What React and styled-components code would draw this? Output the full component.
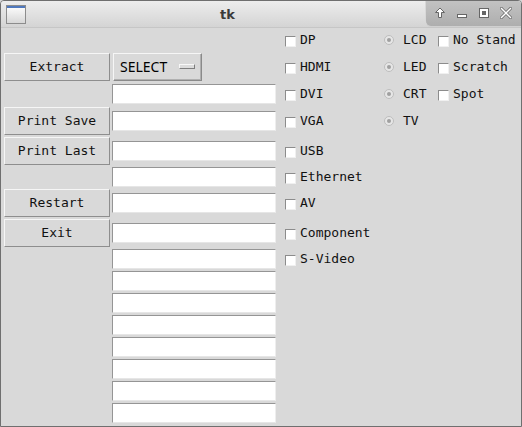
import React from 'react'
import styled, {createGlobalStyle} from 'styled-components'

const GlobalStyle = createGlobalStyle`
    html, body {
        margin: 0;
        padding: 0;
        background: #d9d9d9;
    }
`

const leftButtons = [
    {label: 'Extract', row: 1},
    {label: 'Print Save', row: 3},
    {label: 'Print Last', row: 4},
    {label: 'Restart', row: 6},
    {label: 'Exit', row: 7},
]

const entryRows = [2, 3, 4, 5, 6, 7, 8, 9, 10, 11, 12, 13, 14, 15]

const ports = ['DP', 'HDMI', 'DVI', 'VGA', 'USB', 'Ethernet', 'AV', 'Component', 'S-Video']
const screens = ['LCD', 'LED', 'CRT', 'TV']
const extras = ['No Stand', 'Scratch', 'Spot']

const WindowIcon = () => (
    <svg width="20" height="19" viewBox="0 0 20 19">
        <defs>
            <linearGradient id="wbody" x1="0" y1="0" x2="0" y2="1">
                <stop offset="0" stopColor="#ffffff" />
                <stop offset="1" stopColor="#d6d6d6" />
            </linearGradient>
        </defs>
        <rect x="0.5" y="0.5" width="19" height="18" fill="url(#wbody)" stroke="#8c8c8c" />
        <rect x="1" y="1" width="18" height="2" fill="#4f78bd" />
    </svg>
)

const UpIcon = () => (
    <svg width="12" height="12" viewBox="0 0 12 12">
        <path d="M6 1 L10.5 5.5 L7.5 5.5 L7.5 10.5 L4.5 10.5 L4.5 5.5 L1.5 5.5 Z" fill="#fff" stroke="#666" strokeWidth="1" strokeLinejoin="round" />
    </svg>
)

const MinIcon = () => (
    <svg width="12" height="12" viewBox="0 0 12 12">
        <rect x="1.5" y="7.5" width="9" height="3" fill="#fff" stroke="#666" />
    </svg>
)

const MaxIcon = () => (
    <svg width="12" height="12" viewBox="0 0 12 12">
        <rect x="1" y="1" width="10" height="10" fill="#666" />
        <rect x="2" y="2" width="8" height="8" fill="#fff" />
        <rect x="4" y="4" width="4" height="4" fill="#666" />
    </svg>
)

const CloseIcon = () => (
    <svg width="12" height="12" viewBox="0 0 12 12">
        <path d="M1.5 1.5 L10.5 10.5 M10.5 1.5 L1.5 10.5" stroke="#666" strokeWidth="3" strokeLinecap="square" />
        <path d="M1.5 1.5 L10.5 10.5 M10.5 1.5 L1.5 10.5" stroke="#fff" strokeWidth="1.5" strokeLinecap="square" />
    </svg>
)

const RadioMark = () => (
    <svg width="12" height="12" viewBox="0 0 12 12">
        <circle cx="6" cy="6" r="4.5" fill="#e6e6e6" stroke="#bdbdbd" />
        <circle cx="6" cy="6" r="2" fill="#a0a0a0" />
    </svg>
)

const App = () => {
    return (
        <>
            <GlobalStyle />
            <Window>
                <TitleBar>
                    <IconSlot>
                        <WindowIcon />
                    </IconSlot>
                    <Title>tk</Title>
                    <Controls>
                        <Control><UpIcon /></Control>
                        <Control><MinIcon /></Control>
                        <Control><MaxIcon /></Control>
                        <Control><CloseIcon /></Control>
                    </Controls>
                </TitleBar>
                <Body>
                    {leftButtons.map(b => (
                        <Button key={b.label} $row={b.row}>{b.label}</Button>
                    ))}
                    <MenuButton>
                        SELECT
                        <MenuIndicator />
                    </MenuButton>
                    {entryRows.map(r => (
                        <Entry key={r} $row={r} />
                    ))}
                    {ports.map((p, i) => (
                        <Check key={p} $row={i} $col={2}>
                            <Box />
                            {p}
                        </Check>
                    ))}
                    {screens.map((s, i) => (
                        <Radio key={s} $row={i}>
                            <RadioMark />
                            {s}
                        </Radio>
                    ))}
                    {extras.map((e, i) => (
                        <Check key={e} $row={i} $col={4}>
                            <Box />
                            {e}
                        </Check>
                    ))}
                </Body>
            </Window>
        </>
    )
}

export default App

const Window = styled.div`
    width: 522px;
    height: 427px;
    box-sizing: border-box;
    border: 1px solid #6f6f6f;
    border-radius: 4px 4px 0 0;
    background: #d9d9d9;
    overflow: hidden;
    display: flex;
    flex-direction: column;
`
const TitleBar = styled.div`
    height: 26px;
    flex-shrink: 0;
    display: flex;
    align-items: center;
    background: linear-gradient(#ededed, #d4d4d4);
    border-bottom: 1px solid #c6c6c6;
`
const IconSlot = styled.div`
    width: 20px;
    height: 19px;
    margin: 0 0 0 5px;
    display: flex;
`
const Title = styled.div`
    flex: 1;
    text-align: center;
    padding-left: 4px;
    font: bold 13px "DejaVu Sans", sans-serif;
    color: #3a3a3a;
`
const Controls = styled.div`
    align-self: stretch;
    width: 96px;
    margin-top: -1px;
    height: 27px;
    box-sizing: border-box;
    display: flex;
    align-items: center;
    padding-left: 3px;
    background: linear-gradient(#c3c3c3, #aeaeae);
    border-left: 1px solid #d8d8d8;
    border-bottom: 1px solid #d0d0d0;
    border-bottom-left-radius: 6px;
`
const Control = styled.div`
    width: 22px;
    display: flex;
    justify-content: center;
    align-items: center;
`
const Body = styled.div`
    flex: 1;
    display: grid;
    grid-template-columns: 110px 168px 98px 55px 1fr;
    grid-template-rows: 24px 30px 24px 30px 30px 22px 30px 30px repeat(8, 22px);
    padding-left: 1px;
`
const Button = styled.div`
    grid-row: ${p => p.$row + 1};
    grid-column: 1;
    align-self: center;
    margin-left: 2px;
    width: 106px;
    height: 28px;
    box-sizing: border-box;
    display: flex;
    align-items: center;
    justify-content: center;
    padding-bottom: 1px;
    background: #d9d9d9;
    border: 1px solid;
    border-color: #f6f6f6 #8e8e8e #8e8e8e #f6f6f6;
    font: 13px "DejaVu Sans Mono", monospace;
    color: #111;
`
const MenuButton = styled.div`
    grid-row: 2;
    grid-column: 2;
    align-self: center;
    margin-left: 1px;
    width: 89px;
    height: 28px;
    box-sizing: border-box;
    display: flex;
    align-items: center;
    gap: 12px;
    padding-left: 6px;
    padding-bottom: 1px;
    background: #d9d9d9;
    border: 1px solid;
    border-color: #f6f6f6 #8a8a8a #8a8a8a #f6f6f6;
    box-shadow: inset -1px -1px 0 #b0b0b0;
    font: 14px "Noto Sans", sans-serif;
    color: #000;
`
const MenuIndicator = styled.span`
    width: 16px;
    height: 5px;
    box-sizing: border-box;
    background: #dcdcdc;
    border: 1px solid;
    border-color: #f8f8f8 #7e7e7e #7e7e7e #f8f8f8;
`
const Entry = styled.div`
    grid-row: ${p => p.$row + 1};
    grid-column: 2;
    align-self: center;
    width: 164px;
    height: 20px;
    box-sizing: border-box;
    background: #ffffff;
    border: 1px solid;
    border-color: #959595 #eeeeee #e6e6e6 #959595;
`
const Check = styled.div`
    grid-row: ${p => p.$row + 1};
    grid-column: ${p => p.$col + 1};
    display: flex;
    align-items: center;
    gap: 4px;
    padding-left: 5px;
    padding-bottom: 1px;
    white-space: nowrap;
    font: 13px "DejaVu Sans Mono", monospace;
    color: #111;
`
const Box = styled.span`
    width: 11px;
    height: 11px;
    margin-top: 3px;
    box-sizing: border-box;
    background: #ffffff;
    border: 1px solid;
    border-color: #8c8c8c #f0f0f0 #f0f0f0 #8c8c8c;
`
const Radio = styled.div`
    grid-row: ${p => p.$row + 1};
    grid-column: 4;
    display: flex;
    align-items: center;
    gap: 8px;
    padding-left: 5px;
    padding-bottom: 1px;
    white-space: nowrap;
    font: 13px "DejaVu Sans Mono", monospace;
    color: #111;
`
